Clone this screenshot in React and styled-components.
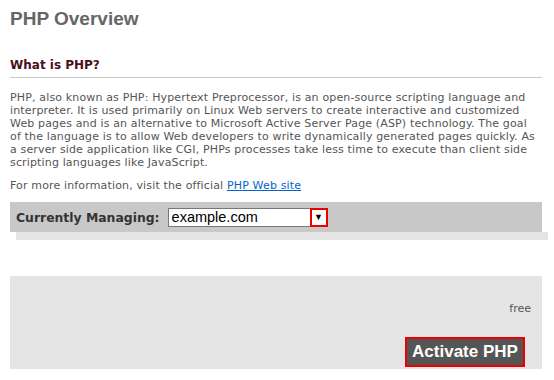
import React from "react";
import styled, { createGlobalStyle } from "styled-components";

const GlobalStyle = createGlobalStyle`
  body {
    margin: 0;
    background: #fff;
    font-family: "DejaVu Sans", Verdana, sans-serif;
  }
`;

const Page = styled.div`
  width: 532px;
  padding: 8px 12px 0 10px;
`;

const Title = styled.h1`
  margin: 0;
  font-family: "Liberation Sans", Arial, sans-serif;
  font-size: 19px;
  line-height: 22px;
  font-weight: bold;
  color: #666;
`;

const SectionHead = styled.h2`
  margin: 27px 0 0 0;
  padding-bottom: 4px;
  border-bottom: 1px solid #c8c8c8;
  font-size: 12px;
  line-height: 16px;
  font-weight: bold;
  color: #4b0f1a;
`;

const Text = styled.p`
  margin: ${(p) => p.$top || 0}px 0 0 0;
  font-size: 11px;
  line-height: 13px;
  letter-spacing: 0.15px;
  white-space: nowrap;
  color: #555;
`;

const Link = styled.a`
  color: #0066cc;
  text-decoration: underline;
`;

const ManageBar = styled.div`
  margin-top: 10px;
  height: 30px;
  display: flex;
  align-items: center;
  gap: 8px;
  padding-left: 6px;
  background: #c8c8c8;
`;

const ManageShade = styled.div`
  margin-left: 6px;
  width: 532px;
  height: 8px;
  background: #e4e4e4;
`;

const Label = styled.span`
  font-size: 12.4px;
  font-weight: bold;
  color: #333;
`;

const Select = styled.div`
  position: relative;
  box-sizing: border-box;
  width: 160px;
  height: 19px;
  display: flex;
  align-items: center;
  padding-left: 3px;
  border: 1px solid #777;
  background: #fff;
  font-family: "Liberation Sans", Arial, sans-serif;
  font-size: 14.5px;
  color: #000;
`;

const Arrow = styled.span`
  position: absolute;
  top: -1px;
  right: -1px;
  box-sizing: border-box;
  width: 18px;
  height: 19px;
  border: 2px solid #e00;
  background: #fff;
  display: flex;
  align-items: center;
  justify-content: center;
  font-size: 9px;
  color: #000;
`;

const ActionBox = styled.div`
  margin-top: 36px;
  height: 93px;
  background: #e4e4e4;
  display: flex;
  flex-direction: column;
  align-items: flex-end;
  padding-right: 17px;
`;

const Price = styled.span`
  margin-top: 26px;
  margin-right: -6px;
  font-size: 11px;
  line-height: 13px;
  color: #555;
`;

const Button = styled.button`
  margin-top: auto;
  margin-bottom: 2px;
  box-sizing: border-box;
  width: 120px;
  height: 30px;
  padding: 0;
  border: 2px solid #e00;
  background: #555;
  color: #fff;
  font-family: "Liberation Sans", Arial, sans-serif;
  font-size: 17px;
  font-weight: bold;
  cursor: pointer;
`;

export default function App() {
  return (
    <Page>
      <GlobalStyle />
      <Title>PHP Overview</Title>
      <SectionHead>What is PHP?</SectionHead>
      <Text $top={13}>
        PHP, also known as PHP: Hypertext Preprocessor, is an open-source scripting language and<br />
        interpreter. It is used primarily on Linux Web servers to create interactive and customized<br />
        Web pages and is an alternative to Microsoft Active Server Page (ASP) technology. The goal<br />
        of the language is to allow Web developers to write dynamically generated pages quickly. As<br />
        a server side application like CGI, PHPs processes take less time to execute than client side<br />
        scripting languages like JavaScript.
      </Text>
      <Text $top={10}>
        For more information, visit the official <Link href="#">PHP Web site</Link>
      </Text>
      <ManageBar>
        <Label>Currently Managing:</Label>
        <Select>
          example.com
          <Arrow>▼</Arrow>
        </Select>
      </ManageBar>
      <ManageShade />
      <ActionBox>
        <Price>free</Price>
        <Button>Activate PHP</Button>
      </ActionBox>
    </Page>
  );
}
